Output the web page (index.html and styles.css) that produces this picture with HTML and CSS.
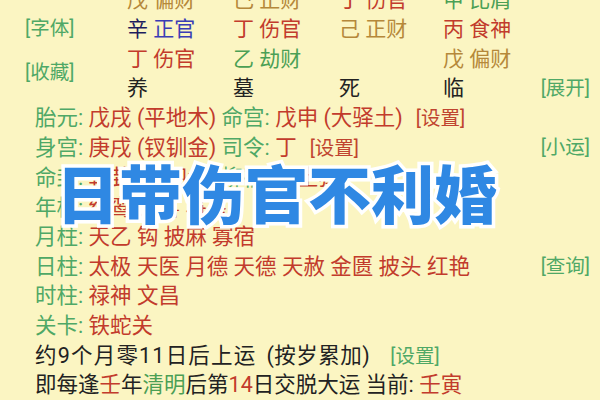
FILE: index.html
```html
<!DOCTYPE html>
<html lang="zh">
<head>
<meta charset="utf-8">
<title>八字</title>
<link rel="stylesheet" href="styles.css">
</head>
<body>
<div class="page">
  <div class="top">
    <div class="side">
      <span class="link">[字体]</span>
      <span class="link second">[收藏]</span>
    </div>
    <div class="grid">
      <span class="brown">戊 偏财</span>
      <span class="brown">己 正财</span>
      <span class="red">丁 伤官</span>
      <span class="green">甲 比肩</span>
      <span class="cell-end"></span>

      <span class="blue"><b class="navy">辛</b> 正官</span>
      <span class="red">丁 伤官</span>
      <span class="brown">己 正财</span>
      <span class="red">丙 食神</span>
      <span class="cell-end"></span>

      <span class="red">丁 伤官</span>
      <span class="green">乙 劫财</span>
      <span></span>
      <span class="brown">戊 偏财</span>
      <span class="cell-end"></span>

      <span class="black">养</span>
      <span class="black">墓</span>
      <span class="black">死</span>
      <span class="black">临</span>
      <span class="link cell-end">[展开]</span>
    </div>
  </div>

  <div class="lines">
    <div class="line"><span><span class="lab">胎元:</span> <span class="red">戊戌 (平地木)</span> <span class="lab">命宫:</span> <span class="red">戊申 (大驿土)</span><span class="set red-link">[设置]</span></span></div>
    <div class="line"><span><span class="lab">身宫:</span> <span class="red">庚戌 (钗钏金)</span> <span class="lab">司令:</span> <span class="red">丁</span><span class="set red-link">[设置]</span></span><span class="link">[小运]</span></div>
    <div class="line"><span><span class="lab">命卦:</span> <span class="red">乾卦 (西四命)</span> <span class="lab">柳宿:</span> <span class="red">柳土獐</span></span></div>
    <div class="line"><span><span class="lab">年柱:</span> <span class="red">红鸾 天喜 将星</span></span></div>
    <div class="line"><span><span class="lab">月柱:</span> <span class="red">天乙 钩 披麻 寡宿</span></span></div>
    <div class="line"><span><span class="lab">日柱:</span> <span class="red">太极 天医 月德 天德 天赦 金匮 披头 红艳</span></span><span class="link">[查询]</span></div>
    <div class="line"><span><span class="lab">时柱:</span> <span class="red">禄神 文昌</span></span></div>
    <div class="line"><span><span class="lab">关卡:</span> <span class="red">铁蛇关</span></span></div>
    <div class="line"><span class="black"><span class="wide-cjk">约9个月零11日后上运</span><span class="paren">(按岁累加)</span><span class="set wide link">[设置]</span></span></div>
    <div class="line"><span class="black">即每逢<span class="red">壬</span>年<span class="green">清明</span>后第<span class="red">14</span>日交脱大运 当前: <span class="red">壬寅</span></span></div>
  </div>

  <h1 class="title">日带伤官不利婚</h1>
</div>
</body>
</html>
```

FILE: styles.css
```css
html, body {
  margin: 0;
  padding: 0;
}
body {
  width: 600px;
  height: 400px;
  overflow: hidden;
  background: #fbf5c2;
  font-family: Roboto, "Noto Sans CJK SC", sans-serif;
  font-size: 21px;
  color: #222;
}
.page {
  position: relative;
  margin-top: -14.5px;
  padding-right: 10px;
}
.top {
  display: flex;
}
.side {
  width: 102px;
  padding-left: 25px;
  padding-top: 32px;
  display: flex;
  flex-direction: column;
  align-items: flex-start;
}
.side .second {
  margin-top: 22px;
}
.link {
  font-size: 19.5px;
  line-height: 22px;
  color: #4fa866;
}
.grid {
  flex: 1;
  display: grid;
  grid-template-columns: 106px 106px 104px 1fr auto;
  grid-auto-rows: 29.6px;
  align-items: center;
  line-height: 29.6px;
  white-space: nowrap;
}
.grid .link {
  line-height: 29.6px;
}
.brown { color: #b5883a; }
.red { color: #c23b2c; }
.green { color: #4b9f55; }
.blue { color: #3a3cb5; }
.navy { color: #1d1d5e; font-weight: normal; }
.black { color: #222; }
.lines {
  padding-left: 35px;
}
.line {
  display: flex;
  justify-content: space-between;
  align-items: center;
  height: 29.6px;
  line-height: 29.6px;
  white-space: nowrap;
  font-size: 21.5px;
}
.lab {
  color: #4fa866;
}
.wide-cjk {
  letter-spacing: 1.2px;
}
.paren {
  margin-left: 10px;
  letter-spacing: 0.5px;
}
.set {
  font-size: 19.5px;
  margin-left: 13px;
}
.set.wide {
  margin-left: 20px;
}
.red-link {
  color: #c0442f;
}
.title {
  position: absolute;
  left: 56px;
  top: 169px;
  margin: 0;
  font-family: "Noto Sans CJK SC", sans-serif;
  font-weight: 900;
  font-size: 63px;
  line-height: 72px;
  color: #2f88e3;
  -webkit-text-stroke: 7px #ffffff;
  paint-order: stroke fill;
  white-space: nowrap;
}
```
